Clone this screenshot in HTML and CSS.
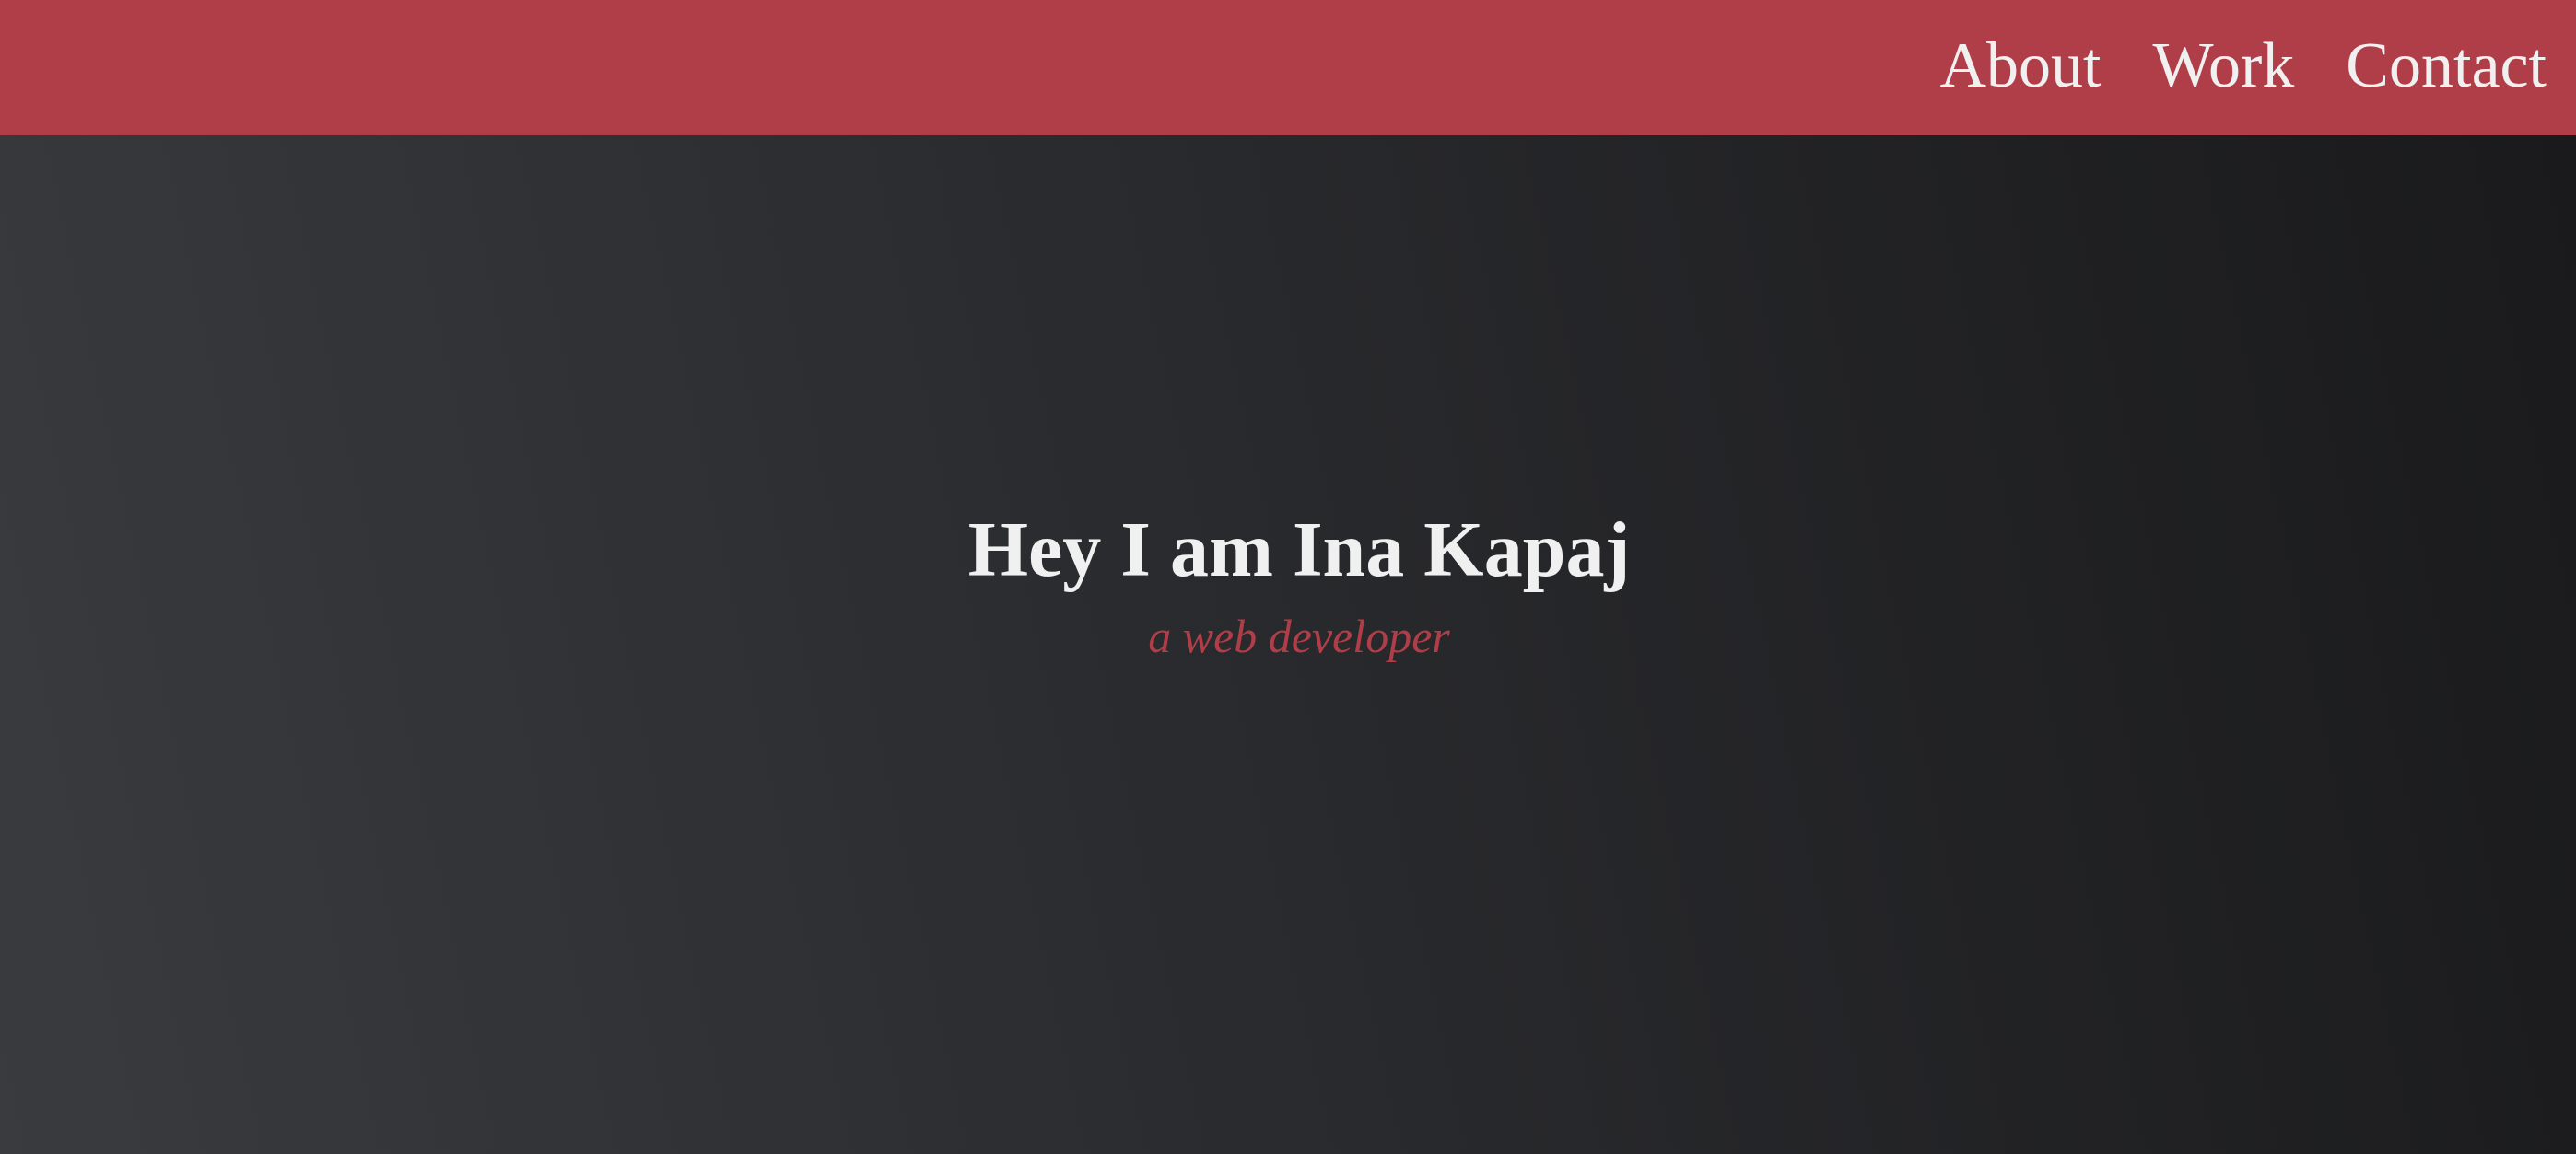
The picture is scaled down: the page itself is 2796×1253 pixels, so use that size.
FILE: index.html
```html
<!DOCTYPE html>
<html lang="en">
<head>
<meta charset="utf-8">
<title>Ina Kapaj</title>
<link rel="stylesheet" href="styles.css">
</head>
<body>
<header class="nav">
  <a class="nav-link" href="#about">About</a>
  <a class="nav-link" href="#work">Work</a>
  <a class="nav-link" href="#contact">Contact</a>
</header>
<main class="hero">
  <h1 class="hero-title">Hey I am Ina Kapaj</h1>
  <p class="hero-sub">a web developer</p>
</main>
</body>
</html>
```
FILE: styles.css
```css
html, body {
  margin: 0;
  padding: 0;
}
body {
  font-family: "Liberation Serif", "Times New Roman", serif;
  background: #1c1c1e;
  color: #f0f0f0;
  height: 1253px;
  overflow: hidden;
  display: flex;
  flex-direction: column;
}
.nav {
  height: 147px;
  box-sizing: border-box;
  background: #b03e48;
  display: flex;
  justify-content: flex-end;
  align-items: flex-start;
  padding: 31px 32px 0 0;
}
.nav-link {
  font-size: 70px;
  line-height: normal;
  color: #f0f0f0;
  text-decoration: none;
  margin-left: 56px;
}
.hero {
  flex: 1;
  background: linear-gradient(78deg, #3a3b3f 0%, #2a2b2e 45%, #1a1a1c 100%);
  display: flex;
  flex-direction: column;
  align-items: center;
  padding-top: 401px;
  padding-left: 24px;
}
.hero-title {
  margin: 0;
  font-size: 84px;
  font-weight: bold;
  line-height: normal;
  color: #f0f0f0;
}
.hero-sub {
  margin: 17px 0 0;
  font-size: 50px;
  font-style: italic;
  line-height: normal;
  color: #b03e48;
}
```
